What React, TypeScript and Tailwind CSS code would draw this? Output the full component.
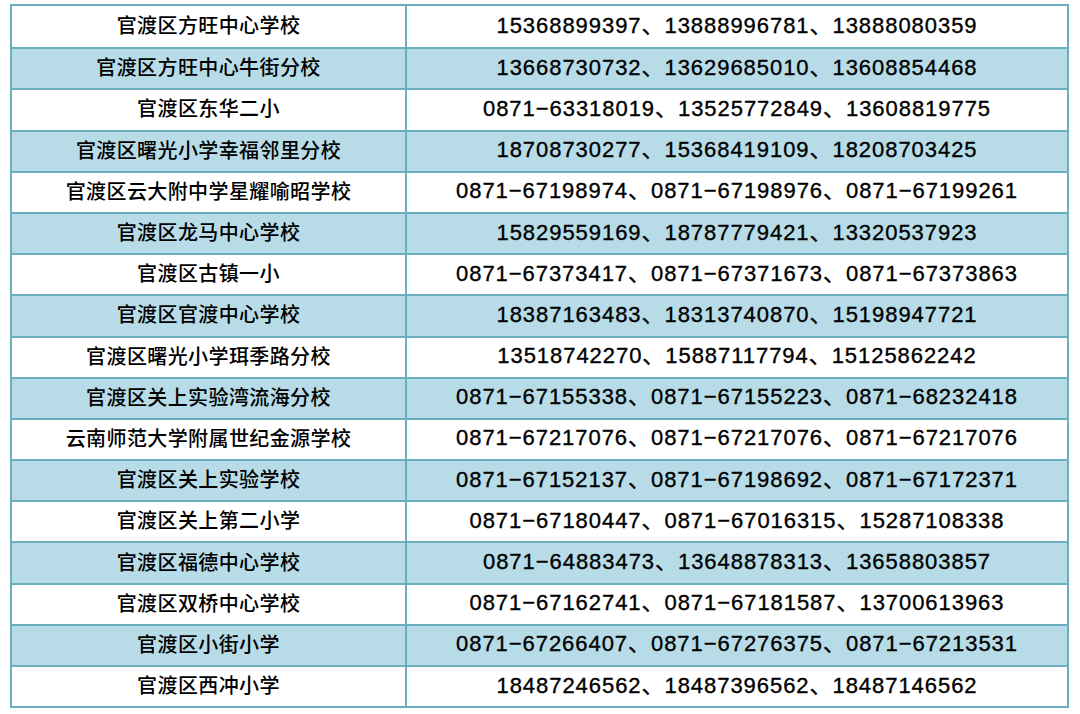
const rows: [string, string][] = [
  ["官渡区方旺中心学校", "15368899397、13888996781、13888080359"],
  ["官渡区方旺中心牛街分校", "13668730732、13629685010、13608854468"],
  ["官渡区东华二小", "0871−63318019、13525772849、13608819775"],
  ["官渡区曙光小学幸福邻里分校", "18708730277、15368419109、18208703425"],
  ["官渡区云大附中学星耀喻昭学校", "0871−67198974、0871−67198976、0871−67199261"],
  ["官渡区龙马中心学校", "15829559169、18787779421、13320537923"],
  ["官渡区古镇一小", "0871−67373417、0871−67371673、0871−67373863"],
  ["官渡区官渡中心学校", "18387163483、18313740870、15198947721"],
  ["官渡区曙光小学珥季路分校", "13518742270、15887117794、15125862242"],
  ["官渡区关上实验湾流海分校", "0871−67155338、0871−67155223、0871−68232418"],
  ["云南师范大学附属世纪金源学校", "0871−67217076、0871−67217076、0871−67217076"],
  ["官渡区关上实验学校", "0871−67152137、0871−67198692、0871−67172371"],
  ["官渡区关上第二小学", "0871−67180447、0871−67016315、15287108338"],
  ["官渡区福德中心学校", "0871−64883473、13648878313、13658803857"],
  ["官渡区双桥中心学校", "0871−67162741、0871−67181587、13700613963"],
  ["官渡区小街小学", "0871−67266407、0871−67276375、0871−67213531"],
  ["官渡区西冲小学", "18487246562、18487396562、18487146562"],
];

export default function App() {
  return (
    <div className="h-[714px] w-[1080px] bg-white pl-[10px] pt-[4px]">
      <div className="w-[1059px] border-2 border-[#6aaebf]">
        {rows.map(([school, phones], i) => (
          <div
            key={school}
            className={`grid h-[41.2px] grid-cols-[395px_1fr] ${
              i > 0 ? "border-t-2 border-[#6aaebf]" : ""
            } ${i % 2 === 1 ? "bg-[#b7dce8]" : "bg-white"}`}
          >
            <div className="flex items-center justify-center border-r-2 border-[#6aaebf] pb-[3px] font-['Noto_Sans_CJK_SC',sans-serif] text-[20px] font-medium tracking-[0.4px] text-black">
              {school}
            </div>
            <div className="flex items-center justify-center pb-[3px] font-['Liberation_Sans','Noto_Sans_CJK_SC',sans-serif] text-[22px] tracking-[0.95px] text-black [-webkit-text-stroke:0.35px_#000]">
              {phones}
            </div>
          </div>
        ))}
      </div>
    </div>
  );
}
